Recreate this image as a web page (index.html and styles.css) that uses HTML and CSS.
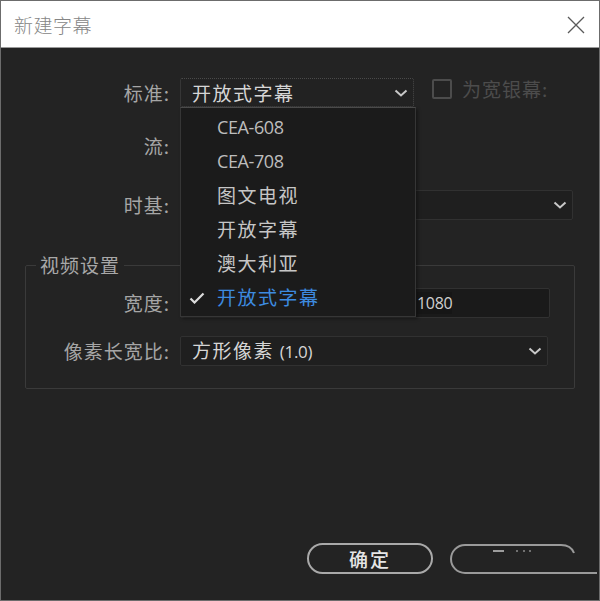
FILE: index.html
```html
<!DOCTYPE html>
<html lang="zh-CN">
<head>
<meta charset="utf-8">
<title>新建字幕</title>
<link rel="stylesheet" href="styles.css">
</head>
<body>
<div class="window">
  <header class="titlebar">
    <span class="title">新建字幕</span>
    <svg class="close" width="18" height="18" viewBox="0 0 18 18"><path d="M1 1L17 17M17 1L1 17"/></svg>
  </header>
  <main class="content">
    <div class="row row-std">
      <span class="lbl">标准:</span>
      <div class="select sel-std focus">
        <span class="val">开放式字幕</span>
        <svg class="chev" width="14" height="8" viewBox="0 0 14 8"><polyline points="1.5,1.5 7,6.5 12.5,1.5"/></svg>
        <ul class="menu">
          <li class="item latin">CEA-608</li>
          <li class="item latin">CEA-708</li>
          <li class="item">图文电视</li>
          <li class="item">开放字幕</li>
          <li class="item">澳大利亚</li>
          <li class="item selected">
            <svg class="tick" width="16" height="12" viewBox="0 0 16 12"><polyline points="1.5,6.5 5.5,10.5 14.5,1.5"/></svg>
            开放式字幕
          </li>
        </ul>
      </div>
      <div class="check">
        <span class="box"></span>
        <span class="check-lbl">为宽银幕:</span>
      </div>
    </div>
    <div class="row row-stream">
      <span class="lbl">流:</span>
      <div class="select sel-std"></div>
    </div>
    <div class="row row-tb">
      <span class="lbl">时基:</span>
      <div class="select sel-tb">
        <span class="val"></span>
        <svg class="chev" width="14" height="8" viewBox="0 0 14 8"><polyline points="1.5,1.5 7,6.5 12.5,1.5"/></svg>
      </div>
    </div>
    <fieldset class="group">
      <legend class="legend">视频设置</legend>
      <div class="row row-w">
        <span class="lbl lbl-g">宽度:</span>
        <div class="input"><span class="num">1080</span></div>
      </div>
      <div class="row row-par">
        <span class="lbl lbl-g">像素长宽比:</span>
        <div class="select sel-par">
          <span class="val">方形像素 <span class="latin small">(1.0)</span></span>
          <svg class="chev" width="14" height="8" viewBox="0 0 14 8"><polyline points="1.5,1.5 7,6.5 12.5,1.5"/></svg>
        </div>
      </div>
    </fieldset>
    <footer class="buttons">
      <button class="btn">确定</button>
      <svg class="btn2" width="150" height="32" viewBox="0 0 150 32">
        <path d="M16 2H112Q122 2 125 10" />
        <path d="M16 2A14 14 0 0 0 16 30H148" />
        <path d="M44 8H55" class="ghost"/>
        <path d="M67 8h2M74 8h2M80 8h2" class="ghost dots"/>
      </svg>
    </footer>
  </main>
</div>
</body>
</html>
```
FILE: styles.css
```css
* { box-sizing: border-box; }
html, body { margin: 0; padding: 0; }
body {
  background: #232323;
  font-family: "Noto Sans CJK SC", "Noto Sans", sans-serif;
}
.window {
  width: 600px;
  height: 601px;
  border: 1px solid #6c6c6c;
  background: #232323;
  display: flex;
  flex-direction: column;
  overflow: hidden;
}
.titlebar {
  height: 47px;
  flex: none;
  background: #ffffff;
  display: flex;
  align-items: center;
  justify-content: space-between;
  padding: 0 14px 0 13px;
  border-bottom: 1px solid #9a9a9a;
}
.title {
  font-size: 19px;
  font-weight: 300;
  color: #858585;
  letter-spacing: 0.5px;
  line-height: 22px;
  margin-top: 1px;
}
.close { margin-top: 1px; }
.close path { stroke: #5a5a5a; stroke-width: 1.3; fill: none; }

.content {
  flex: 1;
  display: flex;
  flex-direction: column;
}
.row {
  display: flex;
  align-items: center;
  gap: 10px;
  height: 29px;
}
.row-std { margin-top: 30px; position: relative; z-index: 5; }
.row-stream { margin-top: 24px; }
.row-tb { margin-top: 30px; height: 30px; }
.lbl {
  width: 169px;
  flex: none;
  text-align: right;
  font-size: 19px;
  line-height: 24px;
  color: #a6a6a6;
  letter-spacing: 1px;
}
.lbl-g { width: 144px; }

.select {
  height: 100%;
  background: #1f1f1f;
  border: 1px solid #313131;
  border-radius: 2px;
  display: flex;
  align-items: center;
  justify-content: space-between;
  padding: 0 5px 0 11px;
  position: relative;
}
.select.focus {
  border: 1px dotted #4a4a4a;
  background: #222222;
}
.sel-std { width: 234px; }
.sel-tb { width: 393px; padding-right: 5px; }
.sel-par { width: 368px; }
.val {
  font-size: 19px;
  line-height: 24px;
  color: #d6d6d6;
  letter-spacing: 1.5px;
}
.chev polyline { fill: none; stroke: #c8c8c8; stroke-width: 2; }
.latin {
  font-family: "Open Sans", "Noto Sans", sans-serif;
  letter-spacing: -0.3px;
}
.small { font-size: 17px; letter-spacing: -0.3px; }

.menu {
  position: absolute;
  left: -1px;
  top: 28px;
  width: 236px;
  height: 210px;
  margin: 0;
  padding: 2px 0 0;
  list-style: none;
  background: #1b1b1b;
  border: 1px solid #363636;
  border-top-color: #4a4a4a;
  box-shadow: 2px 2px 3px rgba(0,0,0,0.35);
}
.item {
  height: 34px;
  display: flex;
  align-items: center;
  padding-left: 36px;
  font-size: 19px;
  line-height: 24px;
  color: #c6c6c6;
  letter-spacing: 1.5px;
  position: relative;
}
.item.latin {
  font-size: 18px;
  letter-spacing: -0.4px;
  color: #bdbdbd;
}
.item.selected { color: #3d8be0; }
.tick {
  position: absolute;
  left: 8px;
  top: 12px;
}
.tick polyline { fill: none; stroke: #dcdcdc; stroke-width: 2.2; }

.check {
  display: flex;
  align-items: center;
  margin-left: 8px;
  gap: 10px;
  margin-top: -8px;
}
.box {
  width: 20px;
  height: 20px;
  border: 2px solid #4c4c4c;
  border-radius: 2px;
}
.check-lbl {
  font-size: 19px;
  line-height: 24px;
  color: #4c4c4c;
  letter-spacing: 1px;
}

.group {
  margin: 35px 24px 0 24px;
  padding: 13px 0 22px 0;
  border: 1px solid #3a3a3a;
  border-radius: 2px;
  min-width: 0;
}
.legend {
  margin-left: 10px;
  padding: 0 4px;
  font-size: 19px;
  line-height: 20px;
  color: #a8a8a8;
  letter-spacing: 1px;
}
.row-w { height: 30px; }
.row-par { height: 30px; margin-top: 18px; }
.input {
  width: 370px;
  height: 100%;
  background: #1a1a1a;
  border: 1px solid #313131;
  border-radius: 2px;
  display: flex;
  align-items: center;
  padding-left: 236px;
}
.num {
  font-family: "Open Sans", "Noto Sans", sans-serif;
  font-size: 16px;
  line-height: 22px;
  color: #d0d0d0;
  background: #161616;
  letter-spacing: -0.3px;
}

.buttons {
  margin-top: 154px;
  display: flex;
  justify-content: flex-end;
  align-items: flex-start;
  gap: 16px;
  padding-right: 0;
}
.btn {
  width: 126px;
  height: 31px;
  border: 2px solid #a9a9a9;
  border-radius: 16px;
  background: #232323;
  color: #e6e6e6;
  font-family: "Noto Sans CJK SC", sans-serif;
  font-size: 19px;
  line-height: 24px;
  letter-spacing: 2px;
  padding: 0;
  font-weight: 500;
}
.btn2 path { fill: none; stroke: #9a9a9a; stroke-width: 2; }
.btn2 .ghost { stroke: #bbbbbb; stroke-width: 1.6; }
.btn2 .dots { stroke: #8a8a8a; }
```
